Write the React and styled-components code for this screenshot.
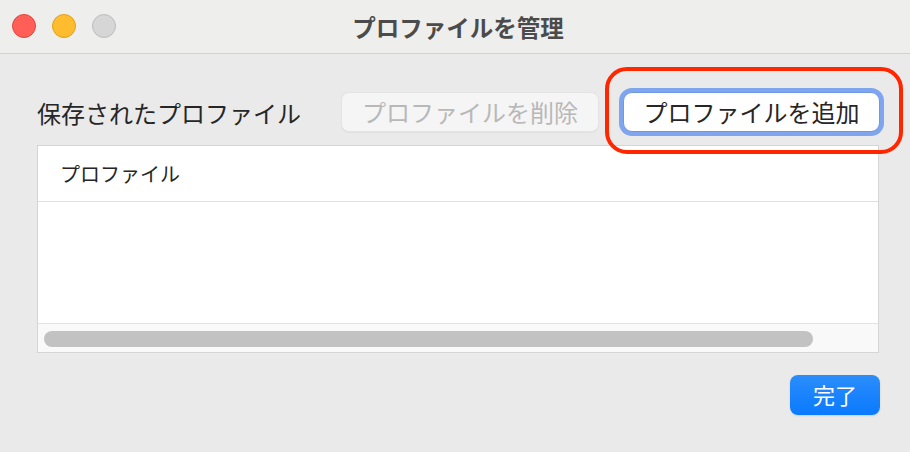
import React from 'react';
import styled, { createGlobalStyle } from 'styled-components';

const GlobalStyle = createGlobalStyle`
    html, body {
        margin: 0;
        padding: 0;
        background: #eaeaea;
    }
    body {
        font-family: "Noto Sans CJK JP", "Noto Sans", sans-serif;
    }
`

export default function App() {
    return (
        <Window>
            <GlobalStyle />
            <TitleBar>
                <Lights>
                    <Light color="#ff5f57" edge="#e2463f" />
                    <Light color="#febc2e" edge="#e1a116" />
                    <Light color="#d6d6d6" edge="#bdbdbd" />
                </Lights>
                <Title>プロファイルを管理</Title>
            </TitleBar>

            <Content>
                <Toolbar>
                    <Label>保存されたプロファイル</Label>
                    <DeleteButton disabled>プロファイルを削除</DeleteButton>
                    <AddButton>プロファイルを追加</AddButton>
                </Toolbar>

                <Table>
                    <HeaderRow>
                        <HeaderCell>プロファイル</HeaderCell>
                    </HeaderRow>
                    <TableBody />
                    <ScrollTrack>
                        <ScrollThumb />
                    </ScrollTrack>
                </Table>

                <Footer>
                    <DoneButton>完了</DoneButton>
                </Footer>
            </Content>

            <Highlight />
        </Window>
    )
}

const Window = styled.div`
    position: relative;
    width: 910px;
    height: 452px;
    background: #eaeaea;
    overflow: hidden;
`

const TitleBar = styled.div`
    position: relative;
    height: 53px;
    background: #eeeeed;
    border-bottom: 1px solid #d2d2d2;
    display: flex;
    align-items: center;
    justify-content: center;
`

const Lights = styled.div`
    position: absolute;
    left: 12px;
    top: 14px;
    display: flex;
    gap: 16px;
`

const Light = styled.span`
    width: 22px;
    height: 22px;
    border-radius: 50%;
    background: ${p => p.color};
    border: 1px solid ${p => p.edge};
`

const Title = styled.div`
    font-size: 23.5px;
    font-weight: bold;
    color: #4b4b4b;
    margin-left: 6px;
`

const Content = styled.div`
    display: flex;
    flex-direction: column;
    padding: 38px 30px 0 37px;
`

const Toolbar = styled.div`
    display: flex;
    align-items: center;
    height: 40px;
`

const Label = styled.div`
    font-size: 24px;
    color: #262626;
    margin-right: 40px;
`

const DeleteButton = styled.button`
    height: 40px;
    width: 258px;
    border-radius: 8px;
    background: #f5f5f5;
    border: 1px solid #e4e4e4;
    box-shadow: 0 1px 1px rgba(0, 0, 0, 0.04);
    color: #b8b8b8;
    font-family: inherit;
    font-size: 24px;
    padding: 0 0 2px;
`

const AddButton = styled.button`
    margin-left: auto;
    height: 40px;
    width: 257px;
    border-radius: 9px;
    background: #ffffff;
    border: 1px solid #6f98e4;
    box-shadow: 0 0 0 4px #7ea5ee;
    color: #262626;
    font-family: inherit;
    font-size: 24px;
    padding: 0 0 2px;
`

const Table = styled.div`
    margin-top: 13px;
    margin-right: 1px;
    height: 208px;
    border: 1px solid #d5d5d5;
    background: #ffffff;
    display: flex;
    flex-direction: column;
    box-sizing: border-box;
`

const HeaderRow = styled.div`
    height: 55px;
    border-bottom: 1px solid #e0e0e0;
    display: flex;
    align-items: center;
    padding-left: 22px;
`

const HeaderCell = styled.div`
    font-size: 20px;
    color: #262626;
`

const TableBody = styled.div`
    flex: 1;
`

const ScrollTrack = styled.div`
    height: 28px;
    border-top: 1px solid #e2e2e2;
    background: #f9f9f9;
    display: flex;
    align-items: flex-start;
    box-sizing: content-box;
    padding: 7px 0 0 6px;
    height: 21px;
`

const ScrollThumb = styled.div`
    width: 769px;
    height: 16px;
    border-radius: 8px;
    background: #c2c2c2;
`

const Footer = styled.div`
    display: flex;
    justify-content: flex-end;
    margin-top: 22px;
`

const DoneButton = styled.button`
    width: 90px;
    height: 40px;
    border-radius: 8px;
    border: none;
    background: linear-gradient(#2b8dfa, #0a7aff);
    box-shadow: 0 1px 2px rgba(0, 0, 0, 0.12);
    color: #ffffff;
    font-family: inherit;
    font-size: 22px;
    padding: 0 0 2px;
`

const Highlight = styled.div`
    position: absolute;
    left: 605px;
    top: 67px;
    width: 298px;
    height: 87px;
    box-sizing: border-box;
    border: 4px solid #ff2600;
    border-radius: 22px;
    pointer-events: none;
`
